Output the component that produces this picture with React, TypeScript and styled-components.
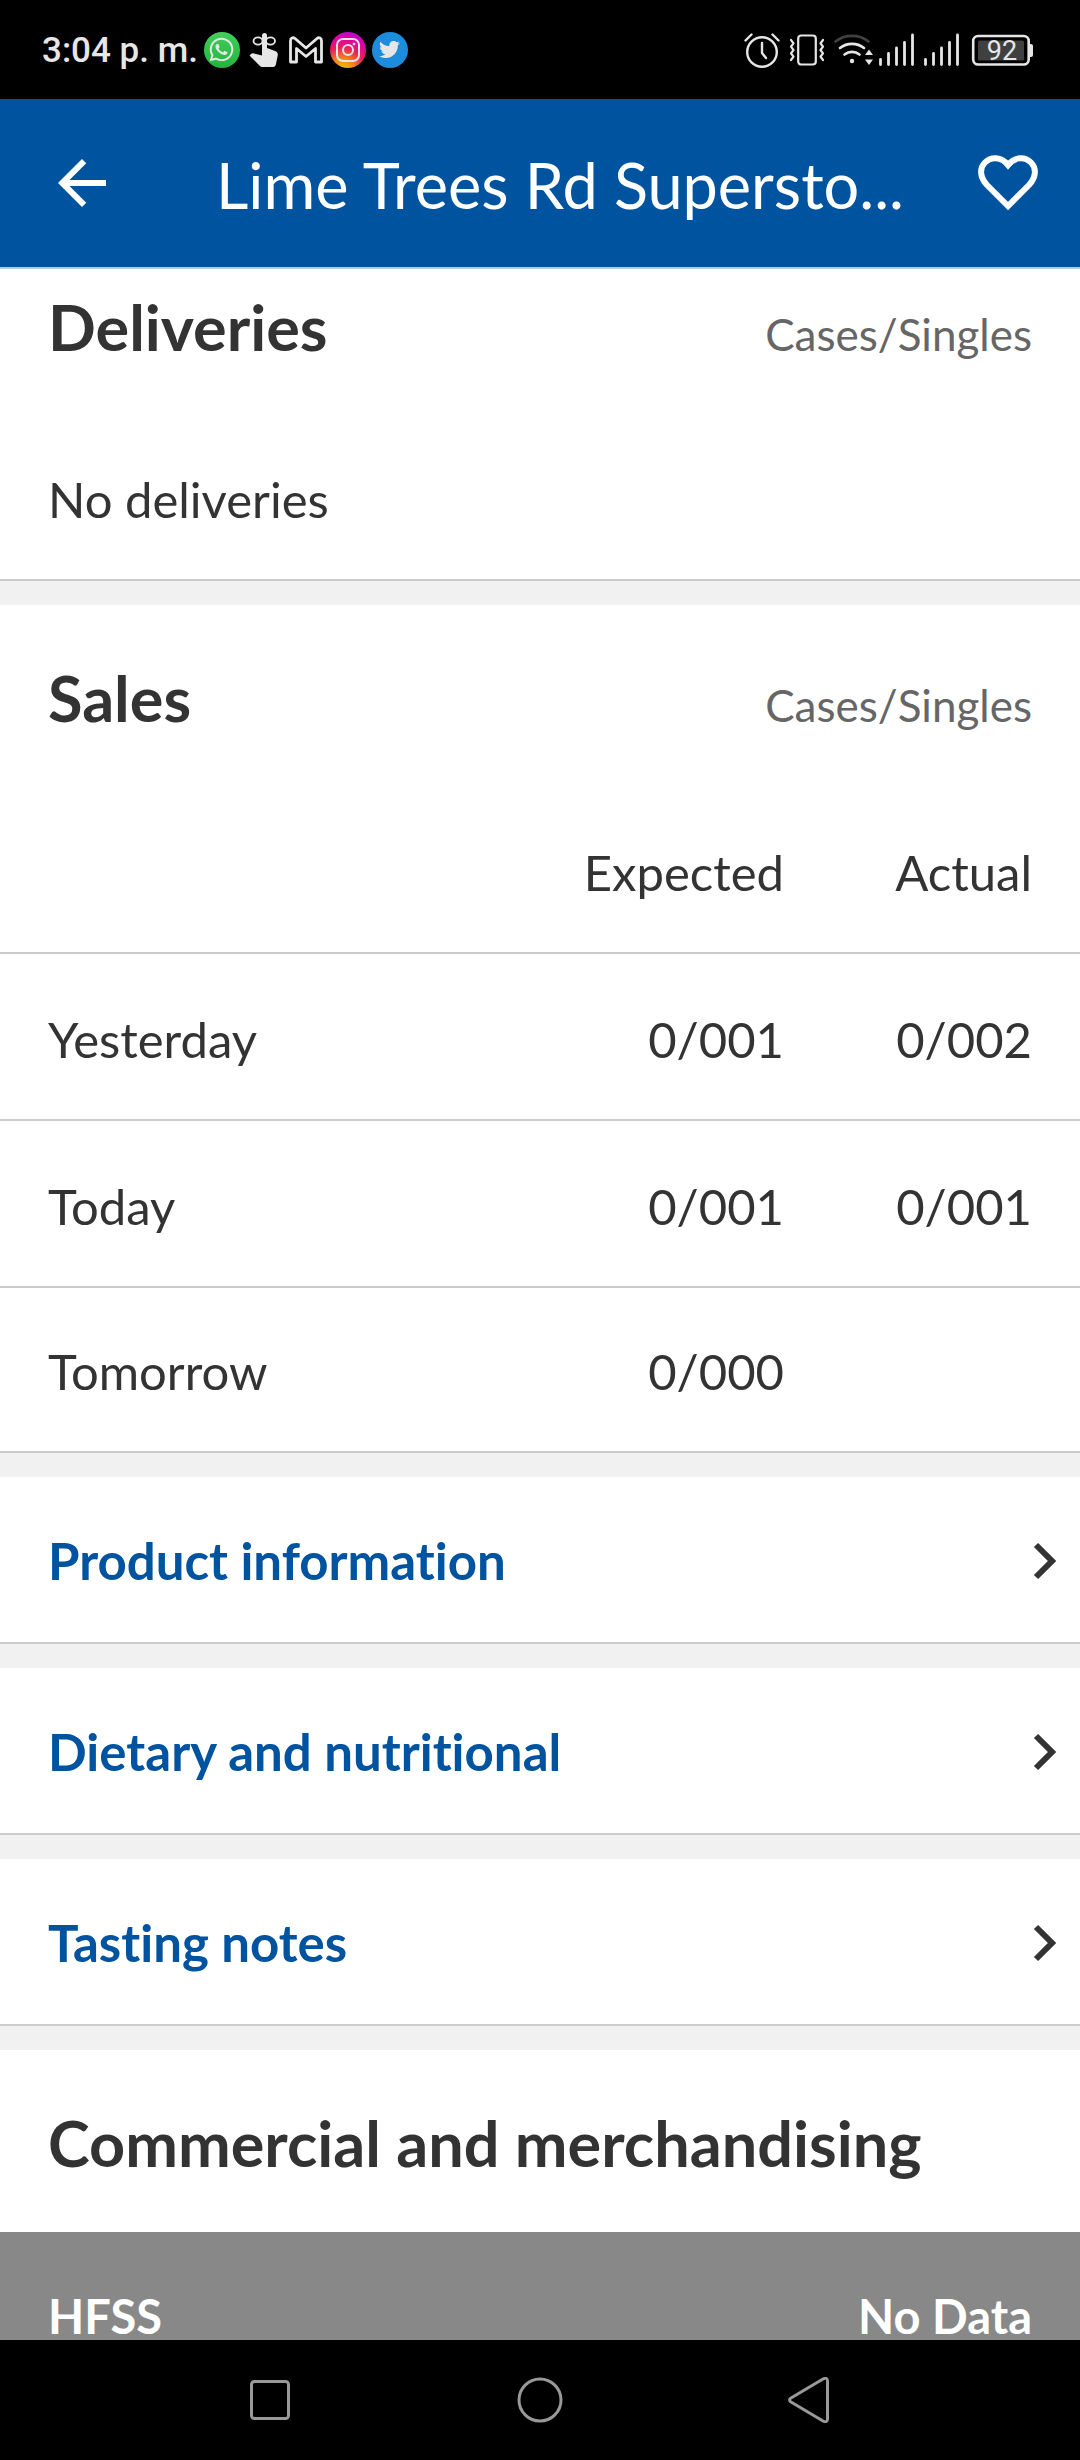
import React from 'react';
import styled, { createGlobalStyle } from 'styled-components';
import { FaWhatsapp, FaTwitter } from 'react-icons/fa';
import { MdArrowBack } from 'react-icons/md';

const color = {
  brand: '#00539f',
  text: '#333333',
  muted: '#666666',
  line: '#cccccc',
  gap: '#f1f1f1',
  status: '#e6e6e6',
};

const GlobalStyle = createGlobalStyle`
  *, *::before, *::after { box-sizing: border-box; }
  body { margin: 0; background: #fff; }
  button { border: 0; padding: 0; background: none; font: inherit; cursor: pointer; }
  svg { display: block; flex: none; }
`;

const Screen = styled.div`
  display: flex;
  flex-direction: column;
  height: 100vh;
  color: ${color.text};
  font-family: Lato, 'Open Sans', sans-serif;
  font-variant-ligatures: none;
`;

const StatusBar = styled.div`
  display: flex;
  flex: none;
  align-items: center;
  justify-content: space-between;
  height: 99px;
  padding: 0 47px 0 42px;
  background: #000;
  color: ${color.status};
`;

const StatusGroup = styled.div<{ $gap: number }>`
  display: flex;
  align-items: center;
  gap: ${(p) => p.$gap}px;
`;

const Clock = styled.time`
  padding-top: 2px;
  font: 500 35px/42px Roboto, sans-serif;
  white-space: nowrap;
`;

const AppBadge = styled.span<{ $background: string }>`
  display: grid;
  place-items: center;
  width: 36px;
  height: 36px;
  border-radius: 50%;
  background: ${(p) => p.$background};
`;

const AppBar = styled.header`
  display: flex;
  flex: none;
  align-items: center;
  height: 170px;
  padding: 0 36px 0 46px;
  border-bottom: 2px solid #b9cce2;
  background: ${color.brand};
  color: #fff;
`;

const IconButton = styled.button`
  display: grid;
  flex: none;
  place-items: center;
  width: 72px;
  height: 72px;
  color: inherit;
`;

const Title = styled.h1`
  flex: 1;
  min-width: 0;
  margin: 0;
  padding: 4px 0 0 98px;
  overflow: hidden;
  font-size: 63px;
  font-weight: 400;
  line-height: 80px;
  text-overflow: ellipsis;
  white-space: nowrap;
`;

const Content = styled.main`
  flex: 1;
  min-height: 0;
  overflow-y: auto;
  scrollbar-width: none;
  background: ${color.gap};
`;

const Section = styled.section<{ $last?: boolean }>`
  margin-bottom: ${(p) => (p.$last ? 0 : 24)}px;
  background: #fff;
`;

const SectionHeader = styled.div<{ $scrolled?: boolean }>`
  display: flex;
  align-items: baseline;
  justify-content: space-between;
  padding: ${(p) => (p.$scrolled ? 22 : 57)}px 48px 53px;
`;

const Heading = styled.h2`
  margin: 0;
  font-size: 63px;
  font-weight: 700;
  line-height: 72px;
`;

const Unit = styled.span`
  color: ${color.muted};
  font-size: 44px;
  line-height: 48px;
`;

const Message = styled.p`
  margin: 0;
  padding: 53px 48px 50px;
  border-bottom: 2px solid ${color.line};
  font-size: 49px;
  line-height: 60px;
`;

const SalesTable = styled.table`
  width: 100%;
  border-collapse: separate;
  border-spacing: 0;
  font-size: 49px;
  line-height: 60px;

  th, td {
    padding: 55px 0 50px;
    border-bottom: 2px solid ${color.line};
    font-weight: 400;
    text-align: right;
  }

  th:first-child, td:first-child {
    padding-left: 48px;
    text-align: left;
  }

  th:last-child, td:last-child {
    width: 296px;
    padding-right: 48px;
  }

  tbody tr:last-child > * {
    padding-top: 53px;
  }
`;

const LinkRow = styled.a`
  display: flex;
  align-items: center;
  justify-content: space-between;
  padding: 54px 24px 51px 48px;
  margin-bottom: 24px;
  border-bottom: 2px solid ${color.line};
  background: #fff;
  color: ${color.brand};
  font-size: 51px;
  font-weight: 700;
  line-height: 60px;
  text-decoration: none;
`;

const DataRow = styled.div`
  display: flex;
  justify-content: space-between;
  padding: 54px 48px 53px;
  background: #888888;
  color: #fff;
  font-size: 47px;
  font-weight: 700;
  line-height: 60px;
`;

const NavBar = styled.nav`
  display: grid;
  flex: none;
  grid-template-columns: repeat(3, 1fr);
  place-items: center;
  height: 120px;
  padding: 0 12.5%;
  background: #000;
  color: #999999;
`;

const ReminderIcon = () => (
  <svg width="36" height="36" viewBox="0 0 36 36" fill="none">
    <path
      d="M16 16V3.5a2.5 2.5 0 0 1 5 0V16l8 3c2 .8 3 2 2.800 4L30 32c-.3 2-1.500 3-3 3H17c-1.500 0-2.500-.500-3.500-1.500L3.500 23.500l1.500-1.500c1-.8 2-.8 3-.5l8 2z"
      fill={color.status}
    />
    <ellipse cx="12" cy="9" rx="4.500" ry="3.600" stroke={color.status} strokeWidth="1.800" />
    <ellipse cx="24.500" cy="9" rx="4.500" ry="3.600" stroke={color.status} strokeWidth="1.800" />
  </svg>
);

const GmailIcon = () => (
  <svg width="36" height="36" viewBox="0 0 36 36" fill="none" stroke={color.status} strokeWidth="2.800" strokeLinejoin="round">
    <path d="M2.500 30V9c0-3 2.500-4 4.500-2.500l11 9.500 11-9.500c2-1.500 4.500-.5 4.500 2.500v21h-6V16.500l-9.500 8-9.500-8V30z" />
  </svg>
);

const InstagramIcon = () => (
  <svg width="26" height="26" viewBox="0 0 26 26" fill="none" stroke={color.status} strokeWidth="2">
    <rect x="2" y="2" width="22" height="22" rx="6" />
    <circle cx="13" cy="13" r="5" />
    <circle cx="19" cy="7" r="1" fill={color.status} strokeWidth="1" />
  </svg>
);

const AlarmIcon = () => (
  <svg width="36" height="36" viewBox="0 0 36 36" fill="none" stroke="currentColor" strokeWidth="2.400" strokeLinecap="round" strokeLinejoin="round">
    <circle cx="18" cy="20" r="14.800" />
    <path d="M18 11v10l4 5M1.500 8.500l6-6M34.500 8.500l-6-6" />
  </svg>
);

const VibrateIcon = () => (
  <svg width="36" height="36" viewBox="0 0 36 36" fill="none" stroke="currentColor" strokeWidth="2.200" strokeLinecap="round" strokeLinejoin="round">
    <rect x="9.200" y="3.500" width="17.600" height="29" rx="3" />
    <path d="M2 8l2.500 3.300L2 14.700 4.500 18 2 21.300l2.500 3.400L2 28M34 8l-2.500 3.300 2.500 3.400-2.500 3.300 2.500 3.300-2.500 3.400L34 28" />
  </svg>
);

const WifiIcon = () => (
  <svg width="36" height="36" viewBox="0 0 36 36" fill="none" stroke="currentColor" strokeWidth="2.600" strokeLinecap="round" overflow="visible">
    <path d="M1.500 9.500C11 2 25 2 34.500 9.500" stroke="#404040" />
    <path d="M6 16c7-5.500 17-5.500 24 0M10.500 22.500c4.500-3.500 10.500-3.500 15 0" />
    <circle cx="18" cy="29" r="2.200" fill="currentColor" stroke="none" />
    <path d="M31 23h8l-4-5.500zM31 27.500h8L35 33z" fill="currentColor" stroke="none" />
  </svg>
);

const SignalIcon = () => (
  <svg width="36" height="36" viewBox="0 0 36 36" fill="none" stroke="currentColor" strokeWidth="2.800" strokeLinecap="round">
    <path d="M1.500 27.500v5M9.500 21.500v11M17.500 16v16.500M25.500 10.500v22M33.500 3v29.500" />
  </svg>
);

const BatteryIcon = () => (
  <svg width="64" height="36" viewBox="0 0 64 36" role="img" aria-label="Battery 92 percent">
    <rect x="4.200" y="4" width="55.500" height="28.500" rx="5" fill="none" stroke="currentColor" strokeWidth="2.600" />
    <path d="M60 12h2a2 2 0 0 1 2 2v9a2 2 0 0 1-2 2h-2z" fill="currentColor" />
    <rect x="9" y="8.500" width="46" height="20" rx="1.500" fill="#404040" />
    <text x="33" y="28" textAnchor="middle" fill="currentColor" fontFamily="Roboto, sans-serif" fontSize="27">92</text>
  </svg>
);

const HeartIcon = () => (
  <svg width="60" height="56" viewBox="0 0 60 56" fill="none" stroke="currentColor" strokeWidth="6">
    <path d="M30 51L9 30C1.500 22 1.500 13 7 7.500 13 1.500 23 1.500 30 10 37 1.500 47 1.500 53 7.500c5.500 5.500 5.500 14.500-2 22.500z" />
  </svg>
);

const ChevronIcon = () => (
  <svg width="24" height="38" viewBox="0 0 24 38" fill="none" stroke={color.text} strokeWidth="6">
    <path d="M4 3l16 16L4 35" />
  </svg>
);

const RecentsIcon = () => (
  <svg width="46" height="46" viewBox="0 0 46 46" fill="none" stroke="currentColor" strokeWidth="3">
    <rect x="4.500" y="4.500" width="37" height="37" rx="3" />
  </svg>
);

const HomeIcon = () => (
  <svg width="46" height="46" viewBox="0 0 46 46" fill="none" stroke="currentColor" strokeWidth="3">
    <circle cx="23" cy="23" r="21" />
  </svg>
);

const BackIcon = () => (
  <svg width="46" height="46" viewBox="0 0 46 46" fill="none" stroke="currentColor" strokeWidth="3" strokeLinejoin="round">
    <path d="M4 21L36 2q4.500-2 4.500 2v38q0 4-4.500 2L4 25q-3-2 0-4z" />
  </svg>
);

const sales = [
  { day: 'Yesterday', expected: '0/001', actual: '0/002' },
  { day: 'Today', expected: '0/001', actual: '0/001' },
  { day: 'Tomorrow', expected: '0/000', actual: '' },
];

const links = ['Product information', 'Dietary and nutritional', 'Tasting notes'];

export default function App() {
  return (
    <Screen>
      <GlobalStyle />
      <StatusBar>
        <StatusGroup $gap={6}>
          <Clock>3:04 p. m.</Clock>
          <AppBadge $background="linear-gradient(#41cf5b, #22b53c)">
            <FaWhatsapp size={27} />
          </AppBadge>
          <ReminderIcon />
          <GmailIcon />
          <AppBadge $background="radial-gradient(circle at 35% 105%, #f0c400 0%, #f08a1c 25%, #e8205c 50%, #e000a8 72%, #8a1cf0 100%)">
            <InstagramIcon />
          </AppBadge>
          <AppBadge $background="#1c8cdc">
            <FaTwitter size={21} />
          </AppBadge>
        </StatusGroup>
        <StatusGroup $gap={9}>
          <AlarmIcon />
          <VibrateIcon />
          <WifiIcon />
          <SignalIcon />
          <SignalIcon />
          <BatteryIcon />
        </StatusGroup>
      </StatusBar>

      <AppBar>
        <IconButton type="button" aria-label="Back">
          <MdArrowBack size={72} />
        </IconButton>
        <Title>Lime Trees Rd Supersto...</Title>
        <IconButton type="button" aria-label="Add to favourites">
          <HeartIcon />
        </IconButton>
      </AppBar>

      <Content>
        <Section>
          <SectionHeader $scrolled>
            <Heading>Deliveries</Heading>
            <Unit>Cases/Singles</Unit>
          </SectionHeader>
          <Message>No deliveries</Message>
        </Section>

        <Section>
          <SectionHeader>
            <Heading>Sales</Heading>
            <Unit>Cases/Singles</Unit>
          </SectionHeader>
          <SalesTable>
            <thead>
              <tr>
                <td />
                <th scope="col">Expected</th>
                <th scope="col">Actual</th>
              </tr>
            </thead>
            <tbody>
              {sales.map((row) => (
                <tr key={row.day}>
                  <th scope="row">{row.day}</th>
                  <td>{row.expected}</td>
                  <td>{row.actual}</td>
                </tr>
              ))}
            </tbody>
          </SalesTable>
        </Section>

        {links.map((label) => (
          <LinkRow key={label} href="#">
            {label}
            <ChevronIcon />
          </LinkRow>
        ))}

        <Section $last>
          <SectionHeader>
            <Heading>Commercial and merchandising</Heading>
          </SectionHeader>
          <DataRow>
            <span>HFSS</span>
            <span>No Data</span>
          </DataRow>
        </Section>
      </Content>

      <NavBar aria-label="System">
        <IconButton type="button" aria-label="Recent apps">
          <RecentsIcon />
        </IconButton>
        <IconButton type="button" aria-label="Home">
          <HomeIcon />
        </IconButton>
        <IconButton type="button" aria-label="Go back">
          <BackIcon />
        </IconButton>
      </NavBar>
    </Screen>
  );
}
